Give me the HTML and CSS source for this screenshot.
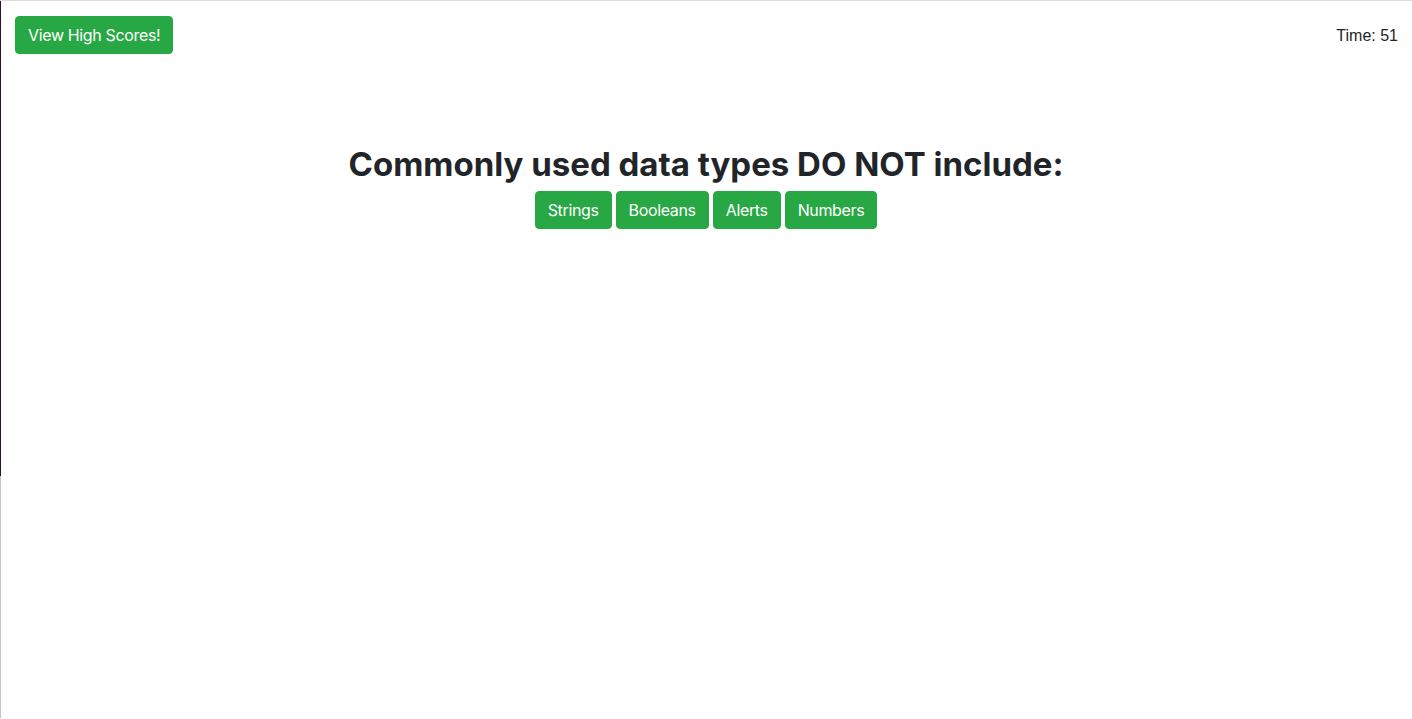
FILE: index.html
```html
<!DOCTYPE html>
<html>
<head>
<meta charset="utf-8">
<link rel="stylesheet" href="styles.css">
</head>
<body>
<div class="frame">
  <header class="topbar">
    <button class="btn">View High Scores!</button>
    <div class="timer">Time: 51</div>
  </header>
  <main class="quiz">
    <h1 class="question">Commonly used data types DO NOT include:</h1>
    <div class="answers">
      <button class="btn">Strings</button>
      <button class="btn">Booleans</button>
      <button class="btn">Alerts</button>
      <button class="btn">Numbers</button>
    </div>
  </main>
</div>
</body>
</html>
```

FILE: styles.css
```css
html, body {
  margin: 0;
  padding: 0;
  background: #fff;
}
body {
  font-family: Inter, "Liberation Sans", Arial, sans-serif;
  color: #212529;
  font-size: 16px;
}
.frame {
  height: 718px;
  border-top: 1px solid #dcdcdc;
  box-sizing: border-box;
  background:
    linear-gradient(#2b0f2e, #2b0f2e) left top / 1px 475px no-repeat,
    linear-gradient(#c4c4c4, #c4c4c4) left bottom / 1px 243px no-repeat;
}
.topbar {
  display: flex;
  justify-content: space-between;
  align-items: center;
  padding: 15px 14px 0 15px;
}
.btn {
  font-family: Inter, "Liberation Sans", Arial, sans-serif;
  font-size: 16px;
  letter-spacing: -0.35px;
  line-height: 24px;
  padding: 6px 12px;
  color: #fff;
  background: #28a745;
  border: 1px solid #28a745;
  border-radius: 4px;
  cursor: pointer;
}
.timer {
  font-family: "Liberation Sans", Arial, sans-serif;
  font-size: 16px;
  color: #212529;
  padding-top: 2px;
}
.quiz {
  display: flex;
  flex-direction: column;
  align-items: center;
  padding-top: 91px;
}
.question {
  margin: 0 0 6px;
  font-size: 33px;
  line-height: 1.2;
  font-weight: 700;
}
.answers {
  display: flex;
  gap: 4px;
}
```
